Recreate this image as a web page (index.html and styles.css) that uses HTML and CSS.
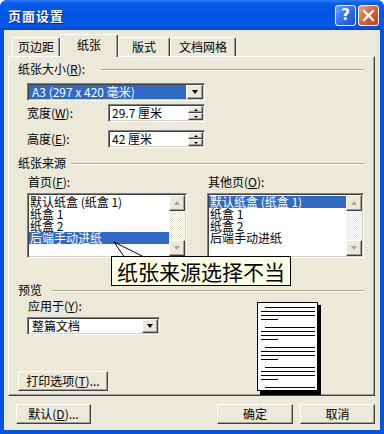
FILE: index.html
```html
<!DOCTYPE html>
<html lang="zh-CN">
<head>
    <meta charset="UTF-8">
    <meta name="viewport" content="width=device-width, initial-scale=1.0">
    <title>页面设置</title>
    <link rel="stylesheet" href="styles.css">
</head>
<body>
<div class="window">
    <div class="titlebar">
        <span class="title">页面设置</span>
        <span class="tb-btn tb-help">?</span>
        <span class="tb-btn tb-close">
            <svg width="13" height="13" viewBox="0 0 13 13"><path d="M2 2 L11 11 M11 2 L2 11" stroke="#fff" stroke-width="2.4" stroke-linecap="square"/></svg>
        </span>
    </div>

    <div class="client">
        <div class="tabs">
            <div class="tab tab-margins">页边距</div>
            <div class="tab tab-paper active">纸张</div>
            <div class="tab tab-layout">版式</div>
            <div class="tab tab-grid">文档网格</div>
        </div>

        <div class="panel">
            <div class="group-title g-size">纸张大小(<u>R</u>):</div>
            <div class="indent">
                <div class="combo combo-size">
                    <span class="combo-value selected">A3 (297 x 420 毫米)</span>
                    <span class="btn-3d combo-btn"><i class="arrow-down"></i></span>
                </div>
                <div class="field-row first">
                    <span class="field-label">宽度(<u>W</u>):</span>
                    <div class="spin">
                        <span class="spin-value">29.7 厘米</span>
                        <span class="spin-btns">
                            <span class="btn-3d"><i class="tiny-up"></i></span>
                            <span class="btn-3d"><i class="tiny-down"></i></span>
                        </span>
                    </div>
                </div>
                <div class="field-row">
                    <span class="field-label">高度(<u>E</u>):</span>
                    <div class="spin">
                        <span class="spin-value">42 厘米</span>
                        <span class="spin-btns">
                            <span class="btn-3d"><i class="tiny-up"></i></span>
                            <span class="btn-3d"><i class="tiny-down"></i></span>
                        </span>
                    </div>
                </div>
            </div>

            <div class="group-title g-source">纸张来源</div>
            <div class="source-cols">
                <div class="source-col col-first">
                    <div class="list-label">首页(<u>F</u>):</div>
                    <div class="listbox">
                        <ul class="list-items">
                            <li>默认纸盒 (纸盒 1)</li>
                            <li>纸盒 1</li>
                            <li>纸盒 2</li>
                            <li class="selected">后端手动进纸</li>
                        </ul>
                        <div class="scrollbar">
                            <span class="btn-3d sb-btn"><i class="arrow-up dim"></i></span>
                            <span class="sb-track"></span>
                            <span class="btn-3d sb-btn"><i class="arrow-down dim"></i></span>
                        </div>
                    </div>
                </div>
                <div class="source-col col-other">
                    <div class="list-label">其他页(<u>O</u>):</div>
                    <div class="listbox">
                        <ul class="list-items">
                            <li class="selected">默认纸盒 (纸盒 1)</li>
                            <li>纸盒 1</li>
                            <li>纸盒 2</li>
                            <li>后端手动进纸</li>
                        </ul>
                        <div class="scrollbar">
                            <span class="btn-3d sb-btn"><i class="arrow-up dim"></i></span>
                            <span class="sb-track"></span>
                            <span class="btn-3d sb-btn"><i class="arrow-down dim"></i></span>
                        </div>
                    </div>
                </div>
            </div>

            <div class="group-title g-preview">预览</div>
            <div class="preview-body">
                <div class="preview-left">
                    <div class="list-label indent">应用于(<u>Y</u>):</div>
                    <div class="combo combo-apply">
                        <span class="combo-value">整篇文档</span>
                        <span class="btn-3d combo-btn"><i class="arrow-down"></i></span>
                    </div>
                    <button class="btn-3d button btn-print">打印选项(<u>T</u>)...</button>
                </div>
                <svg class="page" width="64" height="93" viewBox="0 0 64 93">
                    <rect x="3" y="3" width="61" height="90" fill="#000"/>
                    <rect x="0.5" y="0.5" width="60" height="88" fill="#fff" stroke="#000"/>
                    <g stroke="#000" stroke-width="1">
                        <path d="M8 5.5H58 M4 9.5H58 M4 13.5H58 M4 17.5H21"/>
                        <path d="M8 25.5H58 M4 29.5H58 M4 33.5H58 M4 37.5H21"/>
                        <path d="M8 45.5H58 M4 49.5H58 M4 53.5H58 M4 57.5H21"/>
                        <path d="M8 65.5H58 M4 69.5H58 M4 73.5H58 M4 77.5H21"/>
                        <path d="M8 85.5H58"/>
                    </g>
                </svg>
            </div>

            <svg class="callout-tail" width="40" height="22" viewBox="0 0 40 22">
                <path d="M5 5 L15 19.5 M5 5 L34 19.5" stroke="#000" stroke-width="1" fill="none"/>
            </svg>
            <div class="callout">纸张来源选择不当</div>
        </div>

        <div class="footer">
            <button class="btn-3d button btn-default">默认(<u>D</u>)...</button>
            <button class="btn-3d button btn-ok">确定</button>
            <button class="btn-3d button btn-cancel">取消</button>
        </div>
    </div>
</div>
</body>
</html>
```

FILE: styles.css
```css
body {
    margin: 0;
    font-family: "Noto Sans CJK SC", "Noto Sans", sans-serif;
    font-size: 12px;
    color: #000;
    background: #fff;
}
.window {
    width: 384px;
    height: 434px;
    background: #0553E3;
    border-radius: 7px 7px 0 0;
    display: flex;
    flex-direction: column;
    overflow: hidden;
}
.titlebar {
    height: 30px;
    display: flex;
    align-items: center;
    padding: 0 5px 0 8px;
    background: linear-gradient(#2A7BF5 0%, #0A5AEB 12%, #0054E3 45%, #0058EA 85%, #0049CF 100%);
}
.title {
    flex: 1;
    color: #fff;
    font-weight: bold;
    font-size: 13px;
    letter-spacing: 1px;
    text-shadow: 1px 1px #0A1E7A;
}
.tb-btn {
    width: 19px;
    height: 19px;
    border: 1px solid #fff;
    border-radius: 3px;
    display: flex;
    align-items: center;
    justify-content: center;
    margin-left: 2px;
    margin-top: 1px;
}
.tb-help {
    background: linear-gradient(135deg, #6FA0F8, #2B67E6 60%, #1D4FC9);
    color: #fff;
    font-family: "DejaVu Sans", sans-serif;
    font-weight: bold;
    font-size: 15px;
    line-height: 19px;
}
.tb-close {
    background: linear-gradient(135deg, #F0A080, #DC5A30 55%, #C23F14);
}
.client {
    flex: 1;
    margin: 0 4px 4px 4px;
    background: #ECE9D8;
    padding: 4px 0 0 4px;
    display: flex;
    flex-direction: column;
}
.tabs {
    height: 22px;
    display: flex;
    align-items: flex-end;
    padding-left: 4px;
}
.tab {
    height: 19px;
    box-sizing: border-box;
    border: 1px solid #fff;
    border-bottom: none;
    border-right-color: #404040;
    border-radius: 2px 2px 0 0;
    box-shadow: inset -1px 0 #A0A0A0;
    text-align: center;
    line-height: 17px;
    background: #ECE9D8;
}
.tab.active {
    height: 23px;
    margin-bottom: -1px;
    position: relative;
    z-index: 1;
    line-height: 20px;
}
.tab-margins { width: 48px; }
.tab-paper { width: 58px; }
.tab-layout { width: 52px; }
.tab-grid { width: 66px; }

.panel {
    position: relative;
    height: 340px;
    margin-right: 5px;
    box-sizing: border-box;
    border: 1px solid;
    border-color: #fff #404040 #404040 #fff;
    box-shadow: inset -1px -1px #A0A0A0;
    padding: 5px 10px 0 9px;
}
.group-title {
    display: flex;
    align-items: center;
    height: 14px;
    line-height: 14px;
}
.group-title::after {
    content: "";
    flex: 1;
    height: 0;
    border-top: 1px solid #ACA899;
    border-bottom: 1px solid #fff;
    margin-top: 1px;
}
.g-size::after { margin-left: 16px; }
.g-source { margin-top: 8px; }
.g-source::after { margin-left: 5px; }
.g-preview { margin-top: 25px; }
.g-preview::after { margin-left: 9px; }
.indent { margin-left: 9px; }

.sunken {
    border: 1px solid;
}
.combo, .spin, .listbox {
    box-sizing: border-box;
    border: 1px solid;
    border-color: #808080 #fff #fff #808080;
    box-shadow: inset 1px 1px #404040, inset -1px -1px #D4D0C8;
    background: #fff;
    display: flex;
    padding: 1px;
}
.combo {
    height: 18px;
}
.combo-size {
    width: 178px;
    margin-top: 7px;
}
.combo-value {
    flex: 1;
    line-height: 14px;
    padding-left: 3px;
    margin-right: 1px;
    white-space: nowrap;
}
.combo-value.selected {
    background: #316AC5;
    color: #fff;
}
.btn-3d {
    box-sizing: border-box;
    background: #ECE9D8;
    border: 1px solid;
    border-color: #fff #404040 #404040 #fff;
    box-shadow: inset -1px -1px #A0A0A0;
    display: flex;
    align-items: center;
    justify-content: center;
}
.combo-btn {
    width: 16px;
    height: 14px;
}
.arrow-down, .arrow-up, .tiny-up, .tiny-down {
    display: block;
    width: 0;
    height: 0;
    border-left: 3.5px solid transparent;
    border-right: 3.5px solid transparent;
}
.arrow-down { border-top: 4px solid #000; }
.arrow-up { border-bottom: 4px solid #000; }
.arrow-down.dim { border-top-color: #A8A59A; }
.arrow-up.dim { border-bottom-color: #A8A59A; }
.tiny-up, .tiny-down {
    border-left-width: 2px;
    border-right-width: 2px;
}
.tiny-up { border-bottom: 2px solid #000; }
.tiny-down { border-top: 2px solid #000; }

.field-row {
    display: flex;
    align-items: center;
    height: 18px;
    margin-top: 8px;
}
.field-row.first { margin-top: 3px; }
.field-label {
    width: 81px;
    line-height: 14px;
}
.spin {
    width: 97px;
    height: 18px;
}
.spin-value {
    flex: 1;
    line-height: 14px;
    padding-left: 2px;
}
.spin-btns {
    width: 15px;
    display: flex;
    flex-direction: column;
}
.spin-btns .btn-3d {
    height: 7px;
}

.source-cols {
    display: flex;
    margin-top: 5px;
    margin-left: 9px;
}
.col-first { width: 160px; }
.col-other { width: 157px; margin-left: 20px; }
.list-label {
    height: 14px;
    line-height: 14px;
    padding-left: 1px;
}
.listbox {
    margin-top: 4px;
    height: 65px;
}
.list-items {
    flex: 1;
    list-style: none;
    margin: 0;
    padding: 1px 0 0 0;
}
.list-items li {
    height: 12px;
    line-height: 12px;
    padding-left: 1px;
    white-space: nowrap;
}
.list-items li.selected {
    background: #316AC5;
    color: #fff;
}
.scrollbar {
    width: 16px;
    display: flex;
    flex-direction: column;
}
.sb-btn {
    height: 16px;
}
.sb-track {
    flex: 1;
    background: repeating-conic-gradient(#fff 0 25%, #ECE9D8 0 50%) 0 0 / 2px 2px;
}

.preview-body {
    display: flex;
    height: 92px;
    margin-top: 2px;
}
.preview-left {
    width: 239px;
    display: flex;
    flex-direction: column;
}
.combo-apply {
    width: 133px;
    margin-top: 4px;
    margin-left: 9px;
}
.page {
    margin-top: 3px;
}
.button {
    font-family: inherit;
    font-size: 12px;
    color: #000;
    height: 20px;
    padding: 0;
    line-height: 16px;
}
.btn-print {
    width: 90px;
    margin-top: auto;
}

.callout {
    position: absolute;
    left: 102px;
    top: 199px;
    width: 180px;
    height: 30px;
    box-sizing: border-box;
    border: 1px solid #000;
    background: #FFFFE6;
    font-size: 21px;
    line-height: 28px;
    padding-left: 5px;
    white-space: nowrap;
}
.callout-tail {
    position: absolute;
    left: 100px;
    top: 180px;
}

.footer {
    display: flex;
    margin-top: 8px;
    padding: 0 5px 0 8px;
}
.btn-default { width: 75px; }
.btn-ok { width: 76px; margin-left: auto; }
.btn-cancel { width: 75px; margin-left: 7px; }
```
